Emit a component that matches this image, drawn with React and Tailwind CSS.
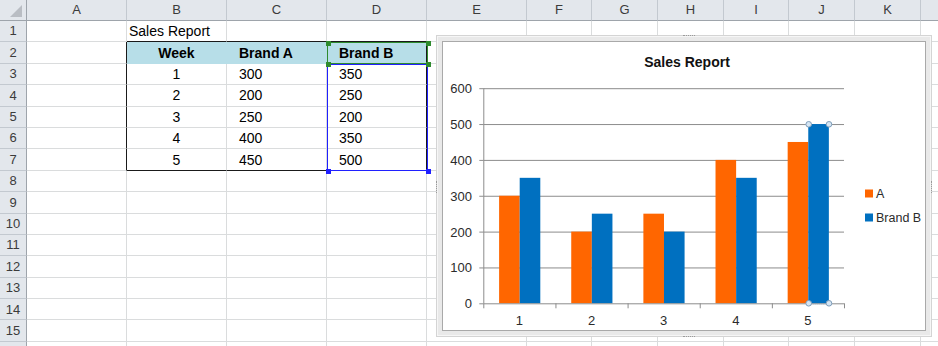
import React from 'react'

const cols = [
  { k: 'A', w: 100 },
  { k: 'B', w: 100 },
  { k: 'C', w: 100 },
  { k: 'D', w: 100 },
  { k: 'E', w: 100 },
  { k: 'F', w: 65 },
  { k: 'G', w: 66 },
  { k: 'H', w: 66 },
  { k: 'I', w: 65 },
  { k: 'J', w: 66 },
  { k: 'K', w: 66 },
  { k: '', w: 40 },
]

const weeks = [1, 2, 3, 4, 5]
const brandA = [300, 200, 250, 400, 450]
const brandB = [350, 250, 200, 350, 500]

const cells = { B1: { t: 'Sales Report', cls: 'pl-[2px]' } }
cells.B2 = { t: 'Week', cls: 'justify-center font-bold', fill: true }
cells.C2 = { t: 'Brand A', cls: 'pl-[12px] font-bold', fill: true }
cells.D2 = { t: 'Brand B', cls: 'pl-[12px] font-bold', fill: true }
weeks.forEach((w, i) => {
  cells['B' + (i + 3)] = { t: String(w), cls: 'justify-center' }
  cells['C' + (i + 3)] = { t: String(brandA[i]), cls: 'pl-[12px]' }
  cells['D' + (i + 3)] = { t: String(brandB[i]), cls: 'pl-[12px]' }
})

// black outline of the B2:D7 table, drawn by the neighbouring cell edges
const inTable = (k) => k === 'B' || k === 'C' || k === 'D'
function edgeClasses(k, r) {
  let cls = ''
  if (k === 'A' && r >= 2 && r <= 7) cls += ' border-r-[#1a1a1a]'
  if (k === 'D' && r >= 2 && r <= 7) cls += ' border-r-[#1a1a1a]'
  if (inTable(k) && (r === 1 || r === 7)) cls += ' border-b-[#1a1a1a]'
  return cls
}

// chart geometry, in page pixels, converted to the svg origin (443, 42)
const OX = 443
const OY = 42
const plotLeft = 483.3
const plotRight = 844
const catW = (plotRight - plotLeft) / 5
const zeroY = 303.3
const unit = 0.3585
const barW = 20.6
const sx = (x) => x - OX
const sy = (y) => y - OY
const vy = (v) => zeroY - v * unit

function Handle({ x, y, color }) {
  return <div className={`absolute h-[5px] w-[5px] ${color}`} style={{ left: x - 2, top: y - 2 }} />
}

function Chart() {
  return (
    <div className="absolute left-[436px] top-[35px] h-[302px] w-[496px] border border-[#d4d4d4] bg-[#e9e9e9] p-[5px] shadow-[inset_0_0_0_1px_#f6f6f6]">
      <div className="absolute left-[246px] top-[-1px] h-[3px] w-[12px] border-t border-dotted border-[#9a9a9a]" />
      <div className="absolute bottom-[-1px] left-[246px] h-[3px] w-[12px] border-b border-dotted border-[#9a9a9a]" />
      <div className="absolute left-[-1px] top-[145px] h-[12px] w-[3px] border-l border-dotted border-[#9a9a9a]" />
      <div className="absolute right-[-1px] top-[145px] h-[12px] w-[3px] border-r border-dotted border-[#9a9a9a]" />
      <div className="h-full w-full border border-[#a9a9a9] bg-white">
        <svg width="482" height="288" style={{ fontFamily: '"Liberation Sans", Arial, sans-serif', display: 'block' }}>
          <text x={sx(687)} y={sy(67)} textAnchor="middle" fontSize="14" fontWeight="bold" fill="#111">
            Sales Report
          </text>
          {[600, 500, 400, 300, 200, 100].map((v) => (
            <line key={v} x1={sx(plotLeft)} x2={sx(plotRight)} y1={sy(vy(v)) + 0.5} y2={sy(vy(v)) + 0.5} stroke="#8c8c8c" strokeWidth="1" />
          ))}
          {[600, 500, 400, 300, 200, 100, 0].map((v) => (
            <g key={'t' + v}>
              <line x1={sx(plotLeft) - 4} x2={sx(plotLeft)} y1={sy(vy(v)) + 0.5} y2={sy(vy(v)) + 0.5} stroke="#8c8c8c" />
              <text x={sx(472)} y={sy(vy(v)) + 5} textAnchor="end" fontSize="13" fill="#2b2b2b">
                {v}
              </text>
            </g>
          ))}
          {weeks.map((w, i) => {
            const x = plotLeft + catW * i
            return (
              <g key={w}>
                <rect x={sx(x + 15.8)} y={sy(vy(brandA[i]))} width={barW} height={brandA[i] * unit} fill="#ff6600" />
                <rect x={sx(x + 15.8 + barW)} y={sy(vy(brandB[i]))} width={barW} height={brandB[i] * unit} fill="#0070c0" />
                <text x={sx(x + catW / 2)} y={sy(325)} textAnchor="middle" fontSize="13" fill="#2b2b2b">
                  {w}
                </text>
              </g>
            )
          })}
          <line x1={sx(plotLeft) + 0.5} x2={sx(plotLeft) + 0.5} y1={sy(vy(600))} y2={sy(zeroY)} stroke="#8c8c8c" />
          <line x1={sx(plotLeft)} x2={sx(plotRight)} y1={sy(zeroY) + 0.5} y2={sy(zeroY) + 0.5} stroke="#8c8c8c" />
          {[0, 1, 2, 3, 4, 5].map((i) => (
            <line key={'x' + i} x1={sx(plotLeft + catW * i) + 0.5} x2={sx(plotLeft + catW * i) + 0.5} y1={sy(zeroY)} y2={sy(zeroY) + 5} stroke="#8c8c8c" />
          ))}
          <line x1={sx(808.7)} x2={sx(829)} y1={sy(zeroY) + 0.5} y2={sy(zeroY) + 0.5} stroke="#7f9db9" strokeDasharray="1 1" />
          {[
            [808.7, 124.3],
            [829, 124.3],
            [808.7, 303.3],
            [829, 303.3],
          ].map(([x, y]) => (
            <circle key={x + '-' + y} cx={sx(x)} cy={sy(y)} r="2.8" fill="#d6e6f4" stroke="#7f9db9" strokeWidth="1" />
          ))}
          <rect x={sx(865)} y={sy(189.5)} width="8" height="8" fill="#ff6600" />
          <text x={sx(876)} y={sy(197.5)} fontSize="12.5" fill="#2b2b2b">
            A
          </text>
          <rect x={sx(865)} y={sy(213.5)} width="8" height="8" fill="#0070c0" />
          <text x={sx(876)} y={sy(221.5)} fontSize="12.5" fill="#2b2b2b">
            Brand B
          </text>
        </svg>
      </div>
    </div>
  )
}

export default function App() {
  const rows = Array.from({ length: 16 }, (_, i) => i + 1)
  return (
    <div className="relative h-[346px] w-[938px] overflow-hidden bg-white font-['Liberation_Sans',Arial,sans-serif] text-[14px] text-black">
      <div className="flex h-[21px]">
        <div className="flex h-full w-[27px] shrink-0 items-end justify-end border-b border-r border-[#9ea4ab] bg-[#e3e7ec] pb-[3px] pr-[4px]">
          <div className="h-0 w-0 border-b-[12px] border-l-[12px] border-b-[#b9bdc3] border-l-transparent" />
        </div>
        {cols.map((c) => (
          <div
            key={'h' + c.k}
            style={{ width: c.w }}
            className="flex shrink-0 items-center justify-center border-b border-r border-[#c3c9d0] border-b-[#9ea4ab] bg-[#e3e7ec] text-[13px] text-[#3b3b3b]"
          >
            {c.k}
          </div>
        ))}
      </div>
      {rows.map((r) => (
        <div key={r} className="flex h-[21.4px]">
          <div className="flex w-[27px] shrink-0 items-center justify-center border-b border-r border-[#c3c9d0] border-r-[#9ea4ab] bg-[#e3e7ec] text-[13px] text-[#3b3b3b]">
            {r <= 15 ? r : null}
          </div>
          {cols.map((c) => {
            const cell = cells[c.k + r]
            return (
              <div
                key={c.k + r}
                style={{ width: c.w }}
                className={`flex shrink-0 items-center whitespace-nowrap border-b border-r pt-[1px] ${
                  cell && cell.fill ? 'border-[#b7dee8] bg-[#b7dee8]' : 'border-[#dadcdd]'
                }${edgeClasses(c.k, r)} ${cell ? cell.cls : ''}`}
              >
                {cell ? cell.t : null}
              </div>
            )
          })}
        </div>
      ))}

      {/* selected ranges: Brand B header and its values */}
      <div className="pointer-events-none absolute left-[327px] top-[42px] h-[22px] w-[101px] border border-[#2e8b2e]" />
      <div className="pointer-events-none absolute left-[327px] top-[64px] h-[107px] w-[101px] border border-[#2020ff]" />
      <Handle x={327.5} y={42.5} color="bg-[#2e8b2e]" />
      <Handle x={427.5} y={42.5} color="bg-[#2e8b2e]" />
      <Handle x={327.5} y={63.5} color="bg-[#2e8b2e]" />
      <Handle x={427.5} y={63.5} color="bg-[#2e8b2e]" />
      <Handle x={327.5} y={170.5} color="bg-[#2020ff]" />
      <Handle x={427.5} y={170.5} color="bg-[#2020ff]" />

      <Chart />
    </div>
  )
}
